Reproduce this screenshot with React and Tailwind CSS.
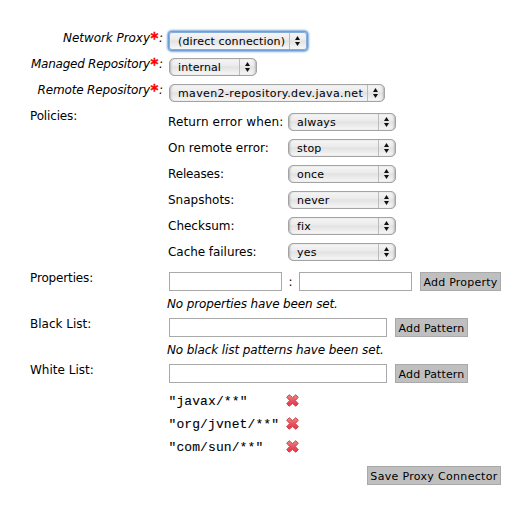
import React from "react";

const focusRing =
  "shadow-[0_0_0_1px_#6f9fd8,0_0_2px_2px_#7dabe0] rounded-[3px] border-[#85abd9]";

function Select({ value, width, text = "", focused = false }) {
  return (
    <button
      type="button"
      className={`flex h-[18px] shrink-0 items-stretch border bg-[linear-gradient(to_bottom,#f5f5f5_0%,#ececec_40%,#e2e2e2_50%,#f7f7f7_100%)] ${
        focused ? focusRing : "rounded-[5px] border-[#a3a3a3] shadow-[inset_2px_0_2px_-1px_#b5b5b5,inset_-2px_0_2px_-1px_#b5b5b5]"
      } ${width}`}
    >
      <span className={`flex-1 whitespace-nowrap pl-2 text-left text-[11px] leading-[17px] ${text}`}>{value}</span>
      <span className="flex w-[17px] shrink-0 items-center justify-center border-l border-[#bcbcbc]">
        <svg width="5" height="10" viewBox="0 0 5 10" className="mr-px">
          <path d="M2.5 0L5 4H0ZM0 6H5L2.5 10Z" fill="#111" />
        </svg>
      </span>
    </button>
  );
}

function RequiredRow({ label, text, children }) {
  return (
    <div className="flex h-[26px] items-center">
      <div className="mr-[6px] flex w-[133px] justify-end whitespace-nowrap pb-[6px] italic">
        <span className={text}>{label}</span>
        <span className="w-[9px] shrink-0 pt-px text-center text-[15px] font-bold not-italic text-[#ff0000] [-webkit-text-stroke:0.4px_#ff0000]">*</span>
        <span>:</span>
      </div>
      {children}
    </div>
  );
}

function Policy({ label, value, text = "" }) {
  return (
    <div className="flex h-[26px] items-center">
      <span className={`w-[120px] whitespace-nowrap ${text}`}>{label}</span>
      <Select value={value} width="w-[108px]" text="tracking-[0.2px]" />
    </div>
  );
}

function Input({ width }) {
  return <input className={`h-[19px] shrink-0 border border-[#a9a9a9] bg-white ${width}`} />;
}

function Button({ width, text = "", children }) {
  return (
    <button
      type="button"
      className={`h-[19px] shrink-0 whitespace-nowrap border border-[#a9a9a9] bg-[#bfbfbf] pt-px text-[11px] leading-[17px] ${width} ${text}`}
    >
      {children}
    </button>
  );
}

function Section({ label, text = "", note, noteText = "", children }) {
  return (
    <div className="flex h-[46px]">
      <span className={`-mt-px w-[138px] leading-[14px] ${text}`}>{label}</span>
      <div>
        <div className="flex pl-px">{children}</div>
        {note && <p className={`-ml-px mt-[6px] whitespace-nowrap italic leading-[14px] ${noteText}`}>{note}</p>}
      </div>
    </div>
  );
}

function DeleteIcon() {
  return (
    <svg width="13" height="13" viewBox="0 0 13 13">
      <defs>
        <linearGradient id="cross" x1="0" y1="0" x2="0" y2="1">
          <stop offset="0" stopColor="#f28c8c" />
          <stop offset="0.5" stopColor="#e85560" />
          <stop offset="1" stopColor="#ee2f48" />
        </linearGradient>
      </defs>
      <path
        d="M3.2 .7L6.5 3.6L9.8 .7L12.3 3.2L9.3 6.5L12.3 9.8L9.8 12.2L6.5 9.4L3.2 12.2L.7 9.8L3.7 6.5L.7 3.2Z"
        fill="url(#cross)"
        stroke="#c93f49"
        strokeWidth="1"
        strokeLinejoin="round"
      />
    </svg>
  );
}

const whitePatterns = ["javax/**", "org/jvnet/**", "com/sun/**"];

export default function App() {
  return (
    <form className="h-[505px] w-[529px] overflow-hidden bg-white pl-[30px] pt-[28px] font-['DejaVu_Sans',sans-serif] text-[12px] leading-[14px] text-black">
      <RequiredRow label="Network Proxy" text="tracking-[-0.05px]">
        <Select value="(direct connection)" width="w-[138px]" text="tracking-[0.16px]" focused />
      </RequiredRow>
      <RequiredRow label="Managed Repository" text="tracking-[-0.25px]">
        <Select value="internal" width="w-[88px]" text="tracking-[0.1px]" />
      </RequiredRow>
      <RequiredRow label="Remote Repository" text="tracking-[-0.15px]">
        <Select value="maven2-repository.dev.java.net" width="w-[216px]" text="tracking-[0.38px]" />
      </RequiredRow>

      <div className="mt-[3px] flex h-[163px]">
        <span className="w-[138px] tracking-[-0.15px]">Policies:</span>
        <div>
          <Policy label="Return error when:" value="always" text="tracking-[0.14px]" />
          <Policy label="On remote error:" value="stop" />
          <Policy label="Releases:" value="once" text="tracking-[-0.15px]" />
          <Policy label="Snapshots:" value="never" />
          <Policy label="Checksum:" value="fix" />
          <Policy label="Cache failures:" value="yes" text="tracking-[-0.05px]" />
        </div>
      </div>

      <Section label="Properties:" text="tracking-[-0.15px]" note="No properties have been set." noteText="tracking-[-0.14px]">
        <Input width="w-[113px]" />
        <span className="w-[17px] pt-[3px] text-center">:</span>
        <Input width="w-[113px]" />
        <Button width="ml-2 w-[81px]" text="tracking-[0.22px]">Add Property</Button>
      </Section>
      <Section label="Black List:" note="No black list patterns have been set." noteText="tracking-[-0.11px]">
        <Input width="w-[218px]" />
        <Button width="ml-2 w-[73px]" text="tracking-[0.14px]">Add Pattern</Button>
      </Section>
      <Section label="White List:">
        <Input width="w-[218px]" />
        <Button width="ml-2 w-[73px]" text="tracking-[0.14px]">Add Pattern</Button>
      </Section>

      <ul className="-mt-[21px] pl-[138px]">
        {whitePatterns.map((pattern) => (
          <li key={pattern} className="flex h-[23px] items-center">
            <code className="w-[118px] pl-[0.5px] pt-[2px] font-['Liberation_Mono',monospace] text-[13px] tracking-[0.1px] [-webkit-text-stroke:0.1px_#000]">
              "{pattern}"
            </code>
            <DeleteIcon />
          </li>
        ))}
      </ul>
      <div className="mt-[8px] flex w-[471px] justify-end">
        <Button width="w-[134px]" text="tracking-[0.32px]">Save Proxy Connector</Button>
      </div>
    </form>
  );
}
